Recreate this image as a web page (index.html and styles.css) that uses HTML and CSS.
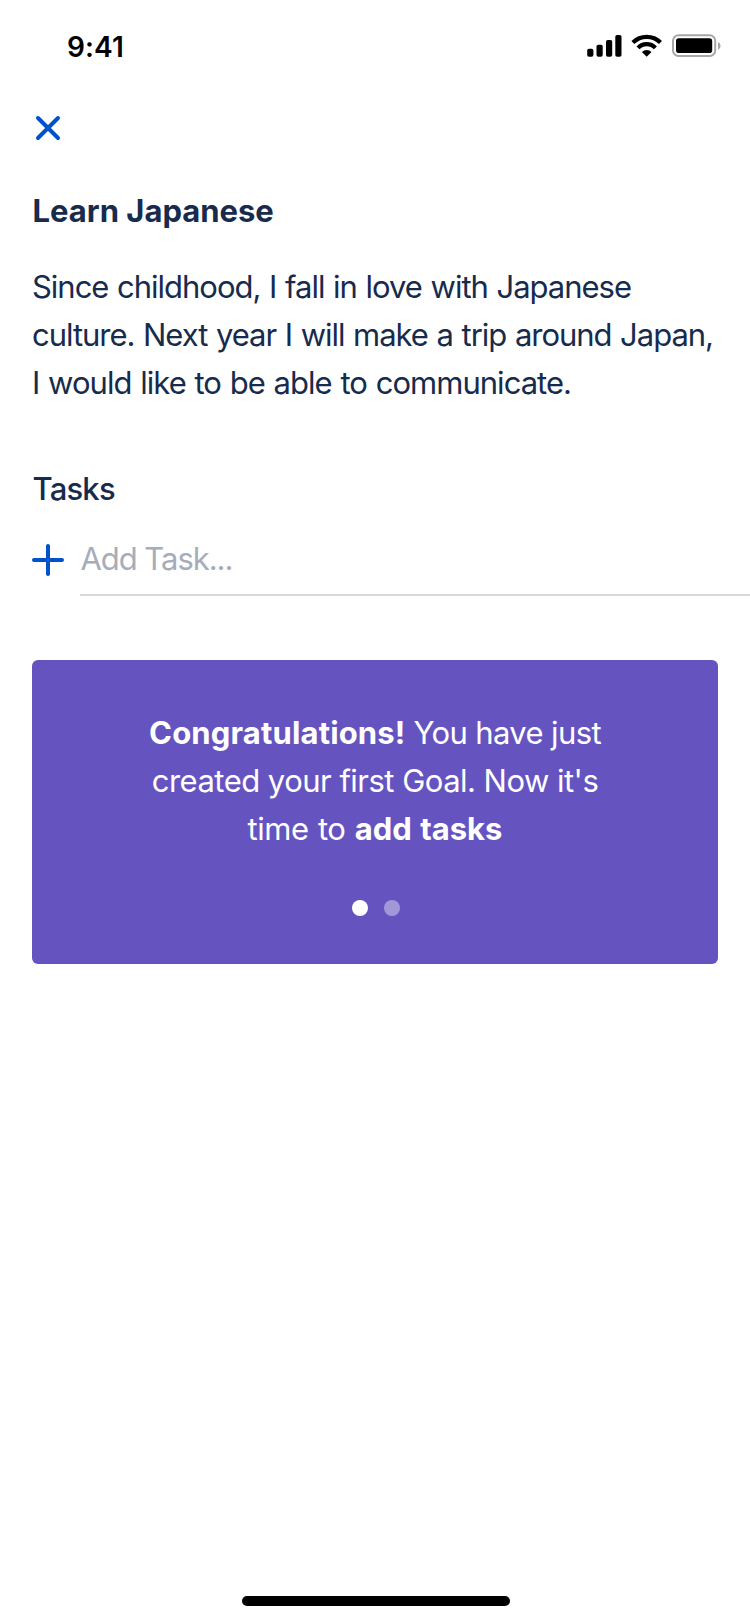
FILE: index.html
```html
<!DOCTYPE html>
<html lang="en">
<head>
<meta charset="utf-8">
<title>Learn Japanese</title>
<link rel="stylesheet" href="styles.css">
</head>
<body>
<div class="screen">
  <header class="status">
    <span class="time">9:41</span>
    <svg class="status-icons" width="140" height="26" viewBox="0 0 140 26">
      <g fill="#000">
        <rect x="1.200" y="14.700" width="6.200" height="8" rx="1.800"/>
        <rect x="10.500" y="10.700" width="6.200" height="12" rx="1.800"/>
        <rect x="20" y="6" width="6.200" height="16.700" rx="1.800"/>
        <rect x="29.300" y="1" width="6.200" height="21.700" rx="1.800"/>
      </g>
      <g fill="none" stroke="#000" stroke-width="4.200">
        <path d="M46.900 8.600a19.400 19.400 0 0 1 27.600 0"/>
        <path d="M52 13.900a12 12 0 0 1 17.400 0"/>
      </g>
      <path d="M60.700 22.700l-4.800-4.700a7 7 0 0 1 9.600 0z"/>
      <rect x="87" y="1.300" width="42.200" height="20.700" rx="5.500" fill="none" stroke="#a6a6a6" stroke-width="2"/>
      <rect x="90" y="4.300" width="36.200" height="14.700" rx="2.800"/>
      <path d="M132 8v8a4.400 4.400 0 0 0 0-8z" fill="#a6a6a6"/>
    </svg>
  </header>
  <nav class="nav">
    <svg width="32" height="32" viewBox="0 0 32 32"><path d="M6 6l20 20M26 6L6 26" class="stroke"/></svg>
  </nav>
  <main>
    <h1 class="title">Learn Japanese</h1>
    <p class="about">Since childhood, I fall in love with Japanese<br><span class="line-2">culture. Next year I will make a trip around Japan,</span><br><span class="line-3">I would like to be able to communicate.</span></p>
    <h2 class="heading">Tasks</h2>
    <div class="add">
      <svg width="32" height="32" viewBox="0 0 32 32"><path d="M16 2v28M2 16h28" class="stroke"/></svg>
      <div class="field">Add Task...</div>
    </div>
    <section class="card">
      <p class="message"><b>Congratulations!</b> You have just<br><span class="goal-line">created your first Goal. Now it's</span><br><span class="task-line">time to <b>add tasks</b></span></p>
      <div class="dots"><i class="dot"></i><i class="dot dim"></i></div>
    </section>
  </main>
  <footer class="home"></footer>
</div>
</body>
</html>
```
FILE: styles.css
```css
* { box-sizing: border-box; margin: 0; }
body { background: #fff; color: #172b4d; font-family: Inter, "Liberation Sans", sans-serif; }
svg { display: block; flex: none; }
.screen { width: 750px; height: 1624px; display: flex; flex-direction: column; overflow: hidden; }
.status { height: 94px; padding: 0 24px 0 67px; display: flex; justify-content: space-between; color: #000; }
.time { padding-top: 30px; font-size: 28px; line-height: 34px; font-weight: 600; letter-spacing: 0.1px; }
.status-icons { margin-top: 34px; }
.nav { height: 92px; padding: 18px 32px; }
.stroke { fill: none; stroke: #0052cc; stroke-width: 4; stroke-linecap: round; }
.title, .about, .heading, .field, .message { font-size: 31px; line-height: 48px; white-space: nowrap; }
.title { margin: 1px 0 0 32.500px; font-weight: 700; }
.about { margin: 28px 0 0 32px; font-weight: 400; letter-spacing: -1.020px; word-spacing: 1px; }
.line-2 { letter-spacing: -1.040px; }
.line-3 { letter-spacing: -0.970px; }
.heading { margin: 58px 0 0 32.500px; font-weight: 500; letter-spacing: -0.8px; }
.add { display: flex; gap: 16px; margin: 21px 0 0 32px; }
.add svg { margin-top: 10px; }
.field { flex: 1; height: 62px; padding: 1px 0 0 0.500px; border-bottom: 2px solid #d8d8d8; color: #a5adba; letter-spacing: -1.050px; }
.card { margin: 64px 32px 0; height: 304px; padding-top: 49px; border-radius: 6px; background: #6554c0; color: #fff; text-align: center; }
.message { font-weight: 400; letter-spacing: -0.630px; }
.message b { font-weight: 700; letter-spacing: 0.150px; }
.goal-line { letter-spacing: -0.520px; }
.task-line { letter-spacing: -0.450px; word-spacing: 1px; }
.task-line b { letter-spacing: 0; }
.dots { display: flex; justify-content: center; gap: 16px; margin: 47px 0 0 2px; }
.dot { width: 16px; height: 16px; border-radius: 50%; background: #fff; }
.dim { opacity: .4; }
.home { width: 268px; height: 10px; margin: auto auto 18px 242px; border-radius: 5px; background: #000; }
```
